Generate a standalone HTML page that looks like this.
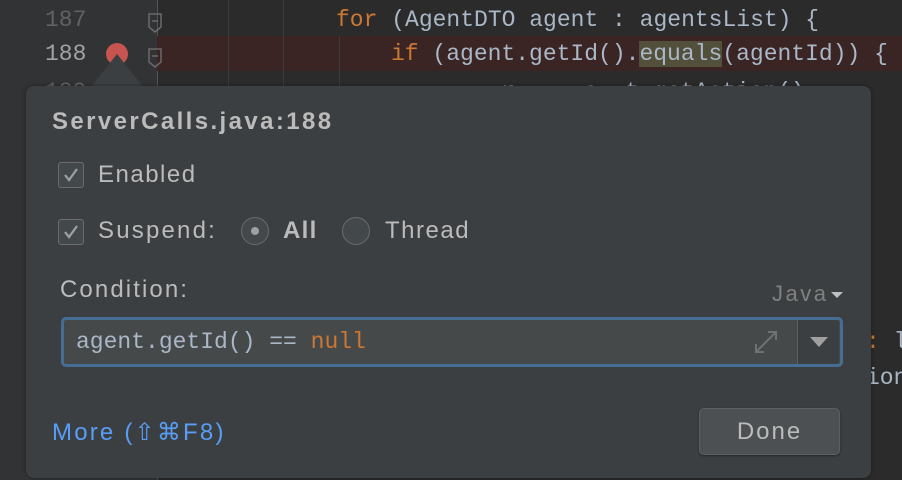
<!DOCTYPE html>
<html><head><style>
body{margin:0;width:902px;height:480px;background:#2b2b2b;position:relative;overflow:hidden;font-family:"Liberation Sans",sans-serif}
.a{position:absolute}
.mono{font-family:"Liberation Mono","DejaVu Sans Mono",monospace;font-size:23px;white-space:pre;line-height:34px}
</style></head><body>
<div class="a" style="left:0;top:0;width:32px;height:480px;background:#313335"></div>
<div class="a" style="left:32px;top:0;width:125px;height:480px;background:#313335"></div>
<div class="a" style="left:157px;top:0;width:1px;height:480px;background:#555"></div>
<div class="a" style="left:157px;top:36px;width:745px;height:35px;background:#3a2424"></div>
<div class="a" style="left:228px;top:0;width:1px;height:90px;background:#3b3b3b"></div>
<div class="a" style="left:283px;top:0;width:1px;height:90px;background:#3b3b3b"></div>
<div class="a" style="left:339px;top:36px;width:1px;height:54px;background:#3b3b3b"></div>
<div class="a mono" style="left:45px;top:3px;color:#606366">187</div>
<div class="a mono" style="left:45px;top:37px;color:#a4a3a3">188</div>
<div class="a mono" style="left:45px;top:75px;color:#606366">189</div>
<div class="a" style="left:106px;top:43px;width:22px;height:22px;border-radius:50%;background:#c75450"></div>
<svg class="a" style="left:146px;top:12px" width="20" height="70"><path d="M3 2h12v13l-6 5l-6-5z M6 9h6 M3 37h12v13l-6 5l-6-5z M6 44h6" fill="none" stroke="#6a6a6a" stroke-width="1.5"/></svg>
<div class="a mono" style="left:336px;top:3px;color:#a9b7c6"><span style="color:#cc7832">for</span> (AgentDTO agent : agentsList) {</div>
<div class="a mono" style="left:391px;top:37px;color:#a9b7c6"><span style="color:#cc7832">if</span> (agent.getId().<span style="background:#52503a">equals</span>(agentId)) {</div>
<div class="a mono" style="left:446px;top:75px;color:#a9b7c6">    r     a  t.getAction()</div>
<div class="a mono" style="left:866px;top:325px;color:#a9b7c6"><span style="color:#cc7832">:</span> l</div>
<div class="a mono" style="left:866px;top:361px;color:#a9b7c6">ion</div>
<svg class="a" style="left:90px;top:54px" width="56" height="34"><path d="M27 0L54 34H0z" fill="#3c3f41"/></svg>
<div class="a" style="left:26px;top:86px;width:845px;height:392px;background:#3c3f41;border-radius:8px;box-shadow:0 0 4px rgba(0,0,0,.4)"></div>
<div class="a" style="left:52px;top:108px;font-size:24px;letter-spacing:2.4px;font-weight:bold;color:#bbbbbb">ServerCalls.java:188</div>
<div class="a" style="left:58px;top:162px;width:24px;height:24px;border:1px solid #6b6b6b;border-radius:3px;background:#43494a"></div>
<svg class="a" style="left:58px;top:162px" width="26" height="26"><path d="M7 13l4 5l8-11" fill="none" stroke="#a0a0a0" stroke-width="2.2"/></svg>
<div class="a" style="left:98px;top:161px;font-size:24px;letter-spacing:1.5px;color:#bbbbbb">Enabled</div>
<div class="a" style="left:58px;top:219px;width:24px;height:24px;border:1px solid #6b6b6b;border-radius:3px;background:#43494a"></div>
<svg class="a" style="left:58px;top:219px" width="26" height="26"><path d="M7 13l4 5l8-11" fill="none" stroke="#a0a0a0" stroke-width="2.2"/></svg>
<div class="a" style="left:98px;top:217px;font-size:24px;letter-spacing:2.2px;color:#bbbbbb">Suspend:</div>
<div class="a" style="left:241px;top:217px;width:26px;height:26px;border:1.5px solid #6b6b6b;border-radius:50%;background:#43494a"></div>
<div class="a" style="left:251px;top:227px;width:8px;height:8px;border-radius:50%;background:#a0a0a0"></div>
<div class="a" style="left:283px;top:217px;font-size:24px;letter-spacing:1.3px;font-weight:bold;color:#bbbbbb">All</div>
<div class="a" style="left:342px;top:217px;width:26px;height:26px;border:1.5px solid #6b6b6b;border-radius:50%;background:#43494a"></div>
<div class="a" style="left:385px;top:217px;font-size:24px;letter-spacing:1.5px;color:#bbbbbb">Thread</div>
<div class="a" style="left:60px;top:276px;font-size:24px;letter-spacing:2.1px;color:#bbbbbb">Condition:</div>
<div class="a" style="left:772px;top:281px;font-size:22px;letter-spacing:2.5px;color:#808080">Java</div>
<svg class="a" style="left:830px;top:291px" width="14" height="8"><path d="M1 1h12l-6 6z" fill="#c0c0c0"/></svg>
<div class="a" style="left:61px;top:317px;width:776px;height:44px;border:3px solid #466d94;border-radius:5px;background:#45494a"></div>
<div class="a" style="left:797px;top:320px;width:1px;height:44px;background:#5e6060"></div>
<div class="a" style="left:798px;top:320px;width:41px;height:44px;background:#3c3f41;border-radius:0 3px 3px 0"></div>
<svg class="a" style="left:809px;top:336px" width="20" height="12"><path d="M1 1h18l-9 10z" fill="#a0a0a0"/></svg>
<svg class="a" style="left:752px;top:328px" width="28" height="28"><path d="M4 24L24 4 M16 4h8v8 M4 16v8h8" fill="none" stroke="#6e7272" stroke-width="2"/></svg>
<div class="a mono" style="left:76px;top:325px;color:#a9b7c6">agent.getId() == <span style="color:#cc7832">null</span></div>
<div class="a" style="left:52px;top:418px;font-size:24px;letter-spacing:2.2px;color:#589df6">More (⇧⌘F8)</div>
<div class="a" style="left:699px;top:408px;width:139px;height:45px;border:1px solid #5e6060;border-radius:5px;background:#4c5052;box-shadow:0 1px 2px rgba(0,0,0,.4)"></div>
<div class="a" style="left:699px;top:418px;width:141px;text-align:center;font-size:24px;letter-spacing:2px;color:#bbbbbb">Done</div>
</body></html>
